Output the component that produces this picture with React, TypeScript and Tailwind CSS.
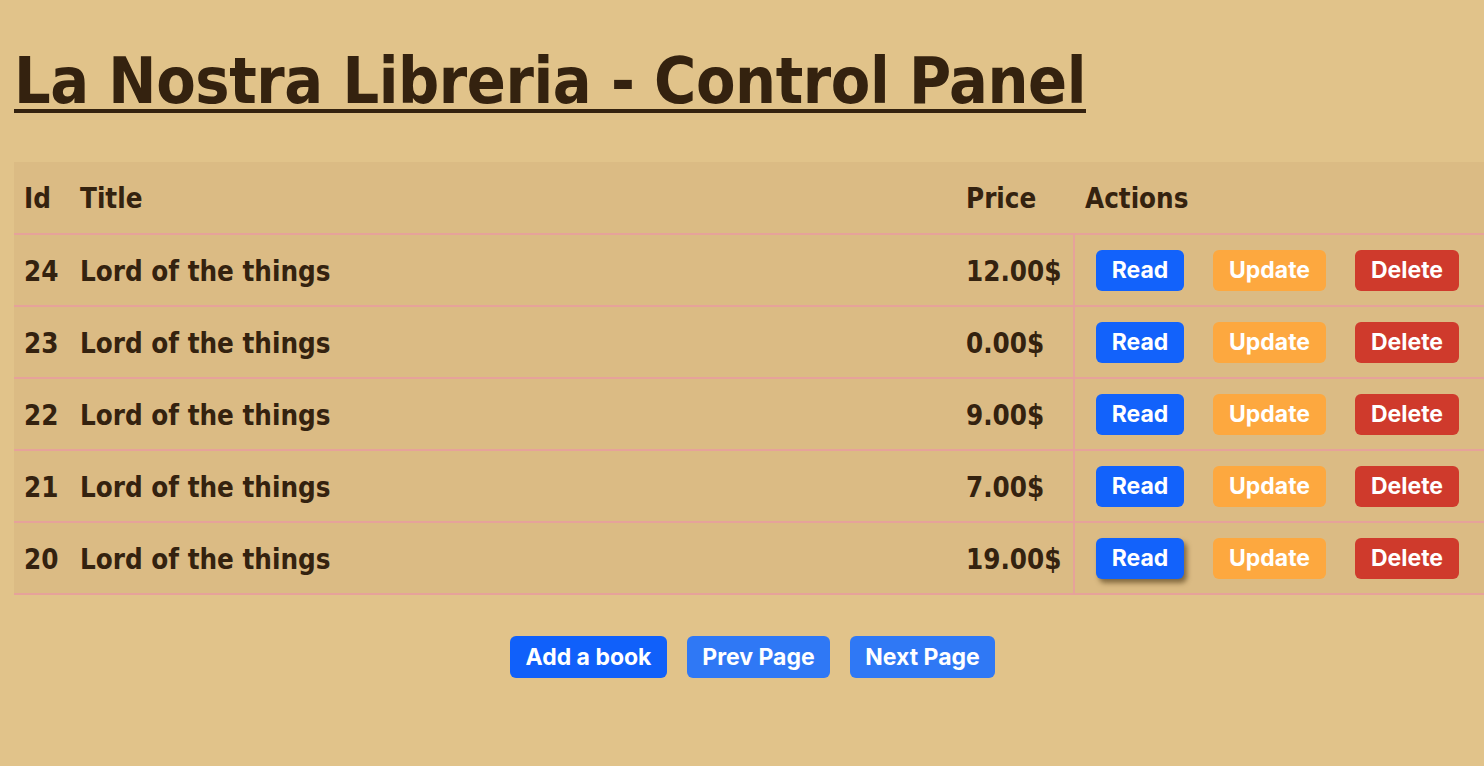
import React from "react"

const books = [
  { id: 24, title: "Lord of the things", price: "12.00$" },
  { id: 23, title: "Lord of the things", price: "0.00$" },
  { id: 22, title: "Lord of the things", price: "9.00$" },
  { id: 21, title: "Lord of the things", price: "7.00$" },
  { id: 20, title: "Lord of the things", price: "19.00$" },
]

const heading = "font-['DejaVu_Sans_Condensed','DejaVu_Sans',sans-serif] font-bold"
const btn = "font-['Inter',sans-serif] font-bold text-white text-[23px] rounded-[6px]"

export default function App() {
  return (
    <div className="min-h-[766px] overflow-hidden bg-[#e1c38a] text-[#34220f]">
      <h1 className={`${heading} ml-[14px] pt-[41px] text-[64px] leading-[80px] tracking-[-0.4px] underline decoration-[4px] underline-offset-[6px]`}>
        La Nostra Libreria - Control Panel
      </h1>

      <table className={`${heading} mt-[41px] ml-[14px] w-[1490px] bg-[#dbbb84] text-left text-[27.5px]`}>
        <thead>
          <tr className="h-[72px] border-b-2 border-[#e6a29a]">
            <th className="w-[56px] pl-[10px] pt-[3px]">Id</th>
            <th className="pl-[10px] pt-[3px]">Title</th>
            <th className="w-[118px] pl-[10px] pt-[3px]">Price</th>
            <th className="w-[430px] pl-[11px] pt-[3px]">Actions</th>
          </tr>
        </thead>
        <tbody>
          {books.map((b, i) => (
            <tr key={b.id} className="h-[72px] border-b-2 border-[#e6a29a]">
              <td className="pl-[10px] pt-[3px]">{b.id}</td>
              <td className="pl-[10px] pt-[3px]">{b.title}</td>
              <td className="pl-[10px] pt-[3px]">{b.price}</td>
              <td className="border-l-2 border-[#e6a29a] pl-[21px]">
                <div className="flex items-center gap-[29px]">
                  <button
                    className={`${btn} h-[41px] w-[88px] bg-[#1262fb] ${i === books.length - 1 ? "shadow-[3px_4px_5px_rgba(60,40,10,0.55)]" : ""}`}
                  >
                    Read
                  </button>
                  <button className={`${btn} h-[41px] w-[113px] bg-[#fda83f]`}>Update</button>
                  <button className={`${btn} h-[41px] w-[104px] bg-[#cf3a2c]`}>Delete</button>
                </div>
              </td>
            </tr>
          ))}
        </tbody>
      </table>

      <div className="mt-[41px] flex justify-center gap-[20px] pl-[21px]">
        <button className={`${btn} h-[42px] w-[157px] bg-[#1060fa]`}>Add a book</button>
        <button className={`${btn} h-[42px] w-[143px] bg-[#2f78f5]`}>Prev Page</button>
        <button className={`${btn} h-[42px] w-[145px] bg-[#2f78f5]`}>Next Page</button>
      </div>
    </div>
  )
}
